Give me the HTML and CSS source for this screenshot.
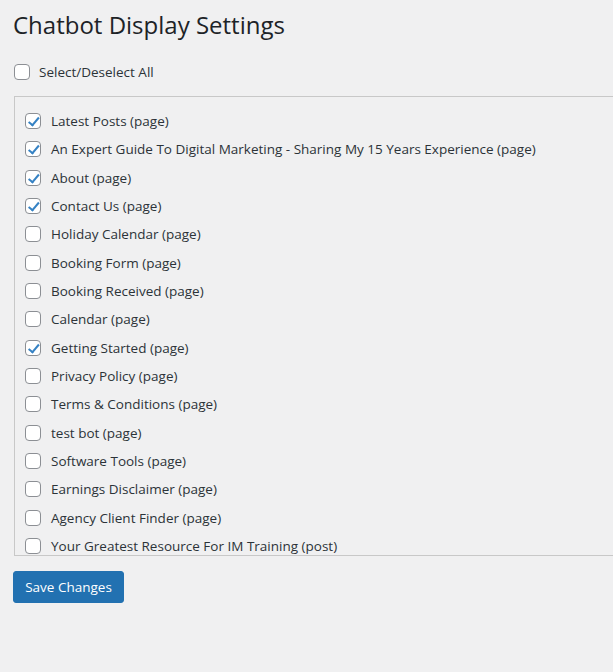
FILE: index.html
```html
<!DOCTYPE html>
<html lang="en">
<head>
<meta charset="utf-8">
<title>Chatbot Display Settings</title>
<link rel="stylesheet" href="styles.css">
</head>
<body>
<div class="wrap">
  <h1 class="title">Chatbot Display Settings</h1>
  <label class="select-all"><input type="checkbox" class="cb"> <span>Select/Deselect All</span></label>
  <div class="list-box">
    <label class="row"><input type="checkbox" class="cb" checked><span>Latest Posts (page)</span></label>
    <label class="row"><input type="checkbox" class="cb" checked><span>An Expert Guide To Digital Marketing - Sharing My 15 Years Experience (page)</span></label>
    <label class="row"><input type="checkbox" class="cb" checked><span>About (page)</span></label>
    <label class="row"><input type="checkbox" class="cb" checked><span>Contact Us (page)</span></label>
    <label class="row"><input type="checkbox" class="cb"><span>Holiday Calendar (page)</span></label>
    <label class="row"><input type="checkbox" class="cb"><span>Booking Form (page)</span></label>
    <label class="row"><input type="checkbox" class="cb"><span>Booking Received (page)</span></label>
    <label class="row"><input type="checkbox" class="cb"><span>Calendar (page)</span></label>
    <label class="row"><input type="checkbox" class="cb" checked><span>Getting Started (page)</span></label>
    <label class="row"><input type="checkbox" class="cb"><span>Privacy Policy (page)</span></label>
    <label class="row"><input type="checkbox" class="cb"><span>Terms &amp; Conditions (page)</span></label>
    <label class="row"><input type="checkbox" class="cb"><span>test bot (page)</span></label>
    <label class="row"><input type="checkbox" class="cb"><span>Software Tools (page)</span></label>
    <label class="row"><input type="checkbox" class="cb"><span>Earnings Disclaimer (page)</span></label>
    <label class="row"><input type="checkbox" class="cb"><span>Agency Client Finder (page)</span></label>
    <label class="row"><input type="checkbox" class="cb"><span>Your Greatest Resource For IM Training (post)</span></label>
  </div>
  <button type="button" class="btn-primary">Save Changes</button>
</div>
</body>
</html>
```

FILE: styles.css
```css
html, body {
  margin: 0;
  padding: 0;
  background: #f0f0f1;
  overflow: hidden;
}
body {
  font-family: "Open Sans", "Noto Sans", sans-serif;
  font-size: 13.5px;
  color: #1d2327;
}
.wrap {
  padding: 0 0 0 13px;
  overflow: hidden;
  height: 672px;
  box-sizing: border-box;
}
.title {
  margin: 0;
  padding-top: 9px;
  font-size: 24px;
  font-weight: 400;
  line-height: 32px;
  color: #1d2327;
}
.select-all {
  display: flex;
  align-items: center;
  margin-top: 22px;
  margin-left: 1px;
  height: 18px;
  color: #2c3338;
}
.select-all .cb {
  margin: 0 9px 0 0;
}
.cb {
  appearance: none;
  -webkit-appearance: none;
  box-sizing: border-box;
  width: 16px;
  height: 16px;
  border: 1px solid #8c8f94;
  border-radius: 4px;
  background: #fff;
  position: relative;
  flex: none;
}
.cb:checked::before {
  content: "";
  position: absolute;
  left: 4.5px;
  top: 1px;
  width: 4px;
  height: 8.5px;
  border-right: 2.4px solid #3582c4;
  border-bottom: 2.4px solid #3582c4;
  transform: rotate(40deg);
}
.list-box {
  box-sizing: border-box;
  width: 640px;
  height: 460px;
  margin-top: 15px;
  margin-left: 1px;
  border: 1px solid #c8c8c8;
  border-right: none;
  padding: 10px 0 0 10px;
  overflow: hidden;
  display: flex;
  flex-direction: column;
}
.row {
  display: flex;
  align-items: center;
  height: 28.33px;
  flex: none;
  color: #2c3338;
}
.row .cb {
  margin: 0 10px 0 0;
}
.btn-primary {
  display: block;
  margin-top: 15px;
  width: 111px;
  height: 32px;
  background: #2271b1;
  border: 1px solid #2271b1;
  border-radius: 3px;
  color: #fff;
  font-family: inherit;
  font-size: 13.5px;
  padding: 0;
  cursor: pointer;
}
```
